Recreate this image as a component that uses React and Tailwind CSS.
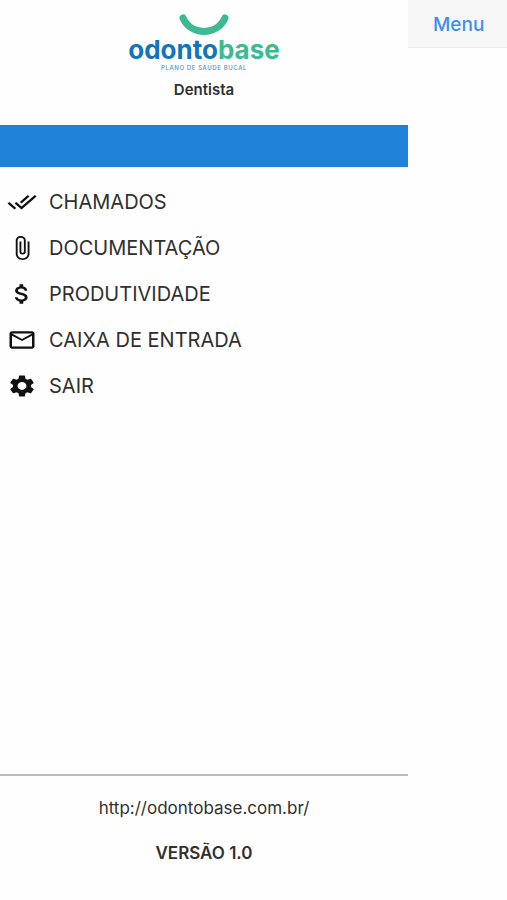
import React from "react";
import { MdDoneAll, MdAttachFile, MdAttachMoney, MdMailOutline, MdSettings } from "react-icons/md";

const MENU_ITEMS = [
  { label: "CHAMADOS", icon: MdDoneAll },
  { label: "DOCUMENTAÇÃO", icon: MdAttachFile },
  { label: "PRODUTIVIDADE", icon: MdAttachMoney },
  { label: "CAIXA DE ENTRADA", icon: MdMailOutline },
  { label: "SAIR", icon: MdSettings },
];

function Logo() {
  return (
    <div className="flex flex-col items-center">
      <svg className="w-[50px] h-[22px]" viewBox="0 0 50 22" fill="none" aria-hidden="true">
        <path d="M4 4C12 22 38 22 46 4" stroke="#3dba91" strokeWidth="7" strokeLinecap="round" />
      </svg>
      <h1 className="text-[26px] leading-7 font-bold text-[#1474bb]">
        odonto<span className="text-[#3dba91]">base</span>
      </h1>
      <p className="text-[6px] leading-2 font-medium tracking-widest text-[#4f95cc]">PLANO DE SAÚDE BUCAL</p>
    </div>
  );
}

function MenuItem({ label, icon: Icon }) {
  return (
    <li>
      <button type="button" className="flex items-center w-full h-[46px] pl-[7px] gap-3 text-left text-xl text-[#303030]">
        <Icon className="w-[30px] h-[26px] shrink-0 text-[#111]" preserveAspectRatio="none" />
        {label}
      </button>
    </li>
  );
}

export default function App() {
  return (
    <div className="flex min-h-screen bg-[#fefefe] font-['Inter','Liberation_Sans',sans-serif]">
      {/* Side menu */}
      <aside className="flex flex-col w-[408px] max-w-5/6 shrink-0">
        <header className="flex flex-col items-center h-[125px] pt-[14px]">
          <Logo />
          <p className="mt-[10px] text-[15px] leading-4 font-semibold text-[#303030]">Dentista</p>
        </header>
        <div className="h-[42px] bg-[#2081d8]" />

        <nav className="pt-3">
          <ul>
            {MENU_ITEMS.map(item => <MenuItem key={item.label} {...item} />)}
          </ul>
        </nav>

        <footer className="flex flex-col items-center mt-auto h-[126px] pt-5 gap-[21px] border-t-2 border-[#bcbdbc] text-[17px] leading-6 text-[#303030]">
          <a href="http://odontobase.com.br/">http://odontobase.com.br/</a>
          <p className="font-semibold">VERSÃO 1.0</p>
        </footer>
      </aside>

      {/* Page behind the menu */}
      <main className="flex-1 min-w-0">
        <div className="flex items-center h-12 pt-1 pl-[25px] bg-[#f7f7f7] border-b border-[#ebebeb]">
          <button type="button" className="text-[19px] font-medium text-[#3f8eee]">Menu</button>
        </div>
      </main>
    </div>
  );
}
